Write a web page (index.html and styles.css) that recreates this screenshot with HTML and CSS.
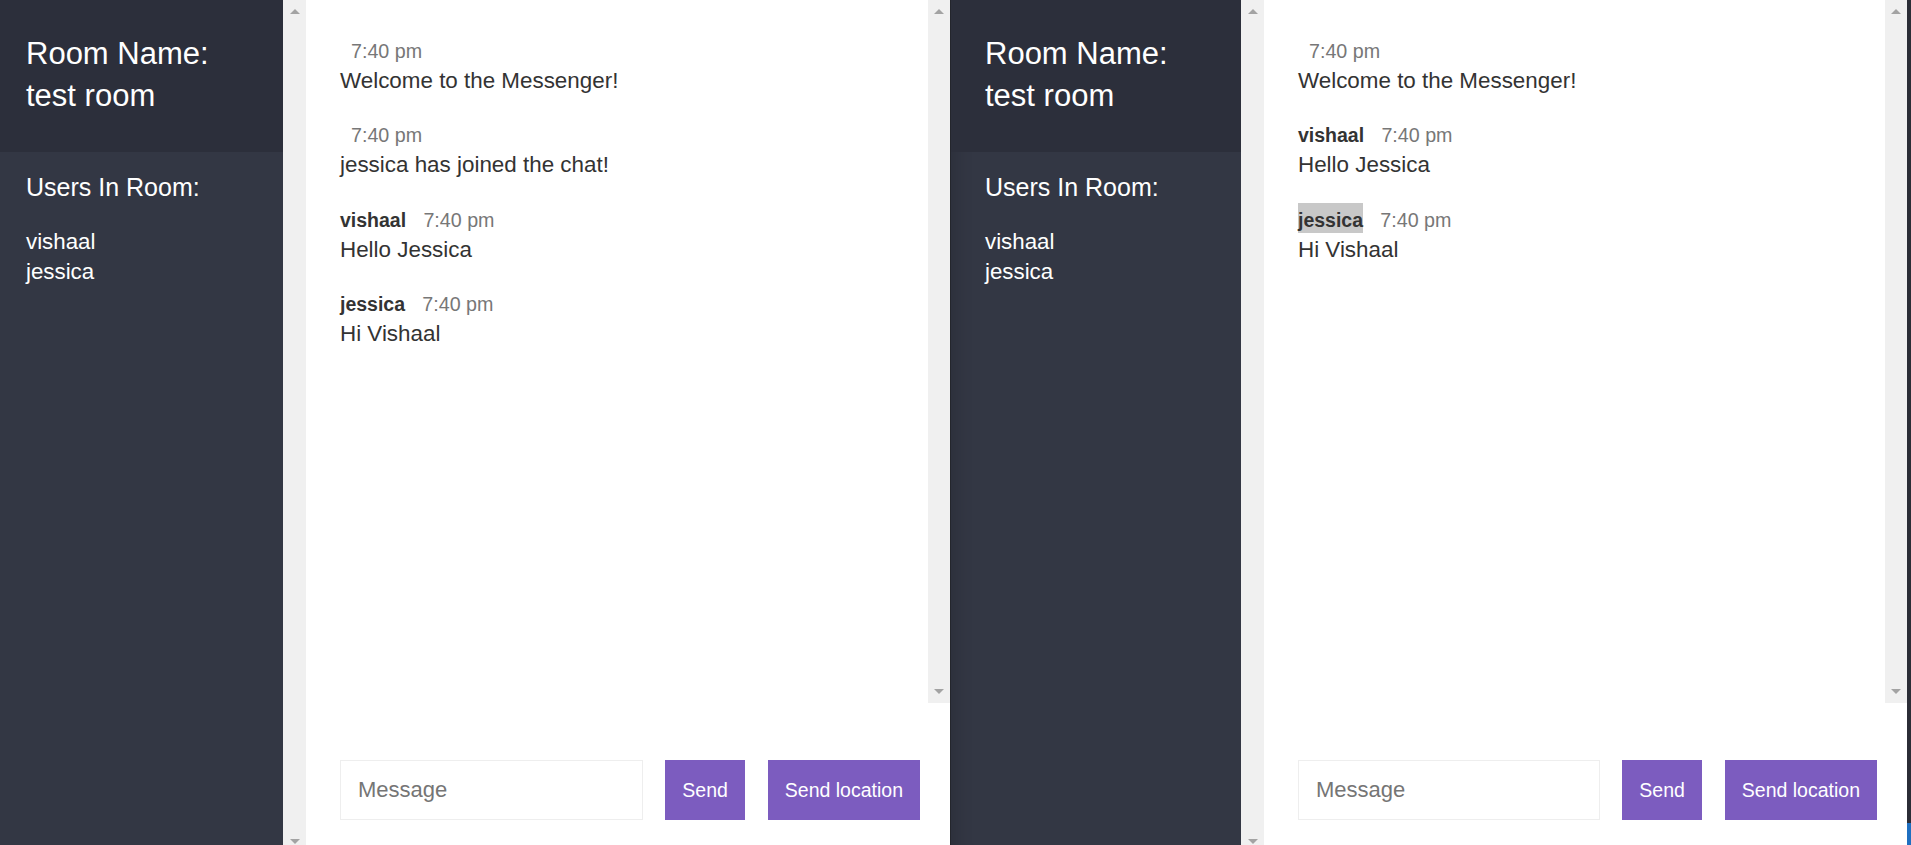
FILE: index.html
```html
<!DOCTYPE html>
<html lang="en">
<head>
<meta charset="utf-8">
<title>Messenger</title>
<link rel="stylesheet" href="styles.css">
</head>
<body>
<div class="screen">
  <div class="window window--clipped">
    <aside class="sidebar">
      <h2 class="room-title">Room Name: test room</h2>
      <h3 class="list-title">Users In Room:</h3>
      <ul class="users">
        <li>vishaal</li>
        <li>jessica</li>
      </ul>
    </aside>
    <div class="scrollbar scrollbar--side"><span class="arrow arrow--up"></span><span class="arrow arrow--down"></span></div>
    <main class="chat">
      <div class="chat__top">
        <div class="messages">
          <div class="message">
            <p><span class="message__name"></span> <span class="message__meta">7:40 pm</span></p>
            <p>Welcome to the Messenger!</p>
          </div>
          <div class="message">
            <p><span class="message__name"></span> <span class="message__meta">7:40 pm</span></p>
            <p>jessica has joined the chat!</p>
          </div>
          <div class="message">
            <p><span class="message__name">vishaal</span> <span class="message__meta">7:40 pm</span></p>
            <p>Hello Jessica</p>
          </div>
          <div class="message">
            <p><span class="message__name">jessica</span> <span class="message__meta">7:40 pm</span></p>
            <p>Hi Vishaal</p>
          </div>
        </div>
        <div class="scrollbar scrollbar--chat"><span class="arrow arrow--up"></span><span class="arrow arrow--down"></span></div>
      </div>
      <div class="compose">
        <form class="compose__form">
          <input type="text" placeholder="Message">
          <button type="button">Send</button>
        </form>
        <button type="button">Send location</button>
      </div>
    </main>
  </div>

  <div class="window window--second">
    <aside class="sidebar sidebar--shaded">
      <h2 class="room-title">Room Name: test room</h2>
      <h3 class="list-title">Users In Room:</h3>
      <ul class="users">
        <li>vishaal</li>
        <li>jessica</li>
      </ul>
    </aside>
    <div class="scrollbar scrollbar--side"><span class="arrow arrow--up"></span><span class="arrow arrow--down"></span></div>
    <main class="chat">
      <div class="chat__top">
        <div class="messages">
          <div class="message">
            <p><span class="message__name"></span> <span class="message__meta">7:40 pm</span></p>
            <p>Welcome to the Messenger!</p>
          </div>
          <div class="message">
            <p><span class="message__name">vishaal</span> <span class="message__meta">7:40 pm</span></p>
            <p>Hello Jessica</p>
          </div>
          <div class="message">
            <p><span class="message__name message__name--selected">jessica</span> <span class="message__meta">7:40 pm</span></p>
            <p>Hi Vishaal</p>
          </div>
        </div>
        <div class="scrollbar scrollbar--chat"><span class="arrow arrow--up"></span><span class="arrow arrow--down"></span></div>
      </div>
      <div class="compose">
        <form class="compose__form">
          <input type="text" placeholder="Message">
          <button type="button">Send</button>
        </form>
        <button type="button">Send location</button>
      </div>
    </main>
  </div>

  <div class="edge"><div class="edge__accent"></div></div>
</div>
</body>
</html>
```

FILE: styles.css
```css
* {
  box-sizing: border-box;
}

html,
body {
  margin: 0;
  padding: 0;
}

body {
  font-family: "Liberation Sans", Arial, Helvetica, sans-serif;
  color: #333333;
  background: #ffffff;
  height: 845px;
  overflow: hidden;
}

.screen {
  display: flex;
  height: 853px;
}

.window {
  display: flex;
  flex-shrink: 0;
  width: 957px;
  height: 853px;
}

.window--clipped {
  margin-left: -8px;
  width: 958px;
}

.window--second {
  border-left: 1px solid #24262d;
}

/* Sidebar */
.sidebar {
  flex-shrink: 0;
  width: 291px;
  background: #333744;
  color: #ffffff;
}

.window--second .sidebar {
  width: 290px;
}

.sidebar--shaded {
  box-shadow: inset 14px 0 18px -10px rgba(0, 0, 0, 0.16);
}

.room-title {
  margin: 0;
  padding: 33px 34px 35px;
  background: #2c2f3b;
  font-size: 31px;
  font-weight: 400;
  line-height: 42px;
}

.list-title {
  margin: 0;
  padding: 18px 34px 0;
  font-size: 25px;
  font-weight: 400;
  line-height: 34px;
}

.users {
  list-style: none;
  margin: 0;
  padding: 23px 34px 0;
  font-size: 22.3px;
  line-height: 30px;
}

/* Fake classic scrollbars */
.scrollbar {
  flex-shrink: 0;
  display: flex;
  flex-direction: column;
  align-items: center;
  justify-content: space-between;
  padding: 9px 0;
  background: #f0f0f0;
}

.scrollbar--side {
  width: 23px;
}

.scrollbar--chat {
  width: 22px;
}

.arrow {
  width: 0;
  height: 0;
  border-left: 5.5px solid transparent;
  border-right: 5.5px solid transparent;
}

.arrow--up {
  border-bottom: 5.5px solid #a3a3a3;
}

.arrow--down {
  border-top: 5.5px solid #a3a3a3;
}

/* Chat */
.chat {
  flex: 1;
  min-width: 0;
  display: flex;
  flex-direction: column;
}

.chat__top {
  flex: 1;
  min-height: 0;
  display: flex;
}

.messages {
  flex: 1;
  min-width: 0;
  padding: 35.5px 34px 0;
  overflow: hidden;
  font-size: 22.4px;
}

.message {
  margin-bottom: 24.5px;
}

.message p {
  margin: 0;
  line-height: 30px;
}

.message__name {
  margin-right: 11px;
  font-size: 19.5px;
  font-weight: 700;
  line-height: 20px;
}

.message__name--selected {
  background: #c8c8c8;
  padding: 6px 0 2.5px;
}

.message__meta {
  color: #777777;
  font-size: 19.7px;
  line-height: 20px;
}

/* Compose */
.compose {
  flex-shrink: 0;
  display: flex;
  margin-top: 22px;
  padding: 35px 30px 33px 34px;
}

.compose__form {
  flex: 1 1 0;
  min-width: 0;
  display: flex;
  margin: 0 23px 0 0;
}

.compose input {
  flex: 1 1 0;
  width: 0;
  min-width: 0;
  height: 60px;
  margin: 0 22px 0 0;
  padding: 0 17px;
  border: 1px solid #eeeeee;
  font-family: inherit;
  font-size: 22px;
  color: #333333;
  outline: none;
}

.compose input::placeholder {
  color: #757575;
}

.compose button {
  flex-shrink: 0;
  padding: 0 17px;
  border: none;
  background: #7c5cbf;
  color: #ffffff;
  font-family: inherit;
  font-size: 19.5px;
  cursor: pointer;
}

/* Right screen edge */
.edge {
  flex: 1;
  display: flex;
  flex-direction: column;
  justify-content: flex-end;
  background: #2b2d36;
  height: 845px;
}

.edge__accent {
  height: 22px;
  background: #1f6fc0;
}
```
